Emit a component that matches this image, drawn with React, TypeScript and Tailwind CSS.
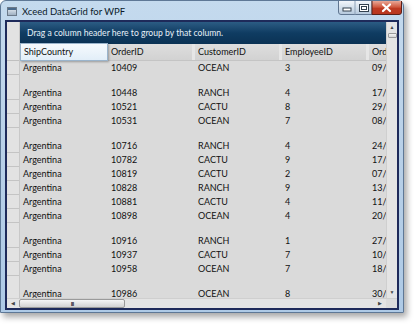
const font = { fontFamily: 'Lato, "Open Sans", sans-serif' };

type Row = [string, string, string, string] | null;

const rows: Row[] = [
  ["10409", "OCEAN", "3", "09/01/1997"],
  null,
  ["10448", "RANCH", "4", "17/02/1997"],
  ["10521", "CACTU", "8", "29/04/1997"],
  ["10531", "OCEAN", "7", "08/05/1997"],
  null,
  ["10716", "RANCH", "4", "24/10/1997"],
  ["10782", "CACTU", "9", "17/12/1997"],
  ["10819", "CACTU", "2", "07/01/1998"],
  ["10828", "RANCH", "9", "13/01/1998"],
  ["10881", "CACTU", "4", "11/02/1998"],
  ["10898", "OCEAN", "4", "20/02/1998"],
  null,
  ["10916", "RANCH", "1", "27/02/1998"],
  ["10937", "CACTU", "7", "10/03/1998"],
  ["10958", "OCEAN", "7", "18/03/1998"],
  null,
  ["10986", "OCEAN", "8", "30/03/1998"],
];

const cols = ["w-[88px]", "w-[87px]", "w-[87px]", "w-[87px]", "w-[60px]"];

// Vista caption buttons: minimize, maximize, close
function CaptionButtons() {
  return (
    <svg width="64" height="15" viewBox="0 0 64 15" className="ml-auto mr-[1px] shrink-0">
      <defs>
        <linearGradient id="cap" x1="0" y1="0" x2="0" y2="1">
          <stop offset="0" stopColor="#f2f6fb" />
          <stop offset="0.5" stopColor="#d3dfeb" />
          <stop offset="1" stopColor="#b3c7dc" />
        </linearGradient>
        <linearGradient id="close" x1="0" y1="0" x2="0" y2="1">
          <stop offset="0" stopColor="#e9a897" />
          <stop offset="0.45" stopColor="#d0593f" />
          <stop offset="0.55" stopColor="#be3a22" />
          <stop offset="1" stopColor="#b8361f" />
        </linearGradient>
      </defs>
      <path d="M0.5 0 V11 Q0.5 13.5 3 13.5 H34 V0" fill="url(#cap)" stroke="#5f7590" />
      <line x1="17" y1="0" x2="17" y2="13.5" stroke="#8ea2b8" />
      <rect x="5" y="7" width="8" height="3" fill="#fff" stroke="#33414f" />
      <rect x="21.5" y="3.5" width="9" height="7" fill="#fff" stroke="#33414f" />
      <rect x="23.5" y="5.5" width="5" height="3" fill="none" stroke="#33414f" />
      <path d="M34 0 V13.5 H61 Q63.5 13.5 63.5 11 V0" fill="url(#close)" stroke="#5a2018" />
      <path d="M45 3.5 L52 10 M52 3.5 L45 10" stroke="#fff" strokeWidth="2.2" strokeLinecap="round" />
    </svg>
  );
}

function TitleBar() {
  return (
    <div className="flex h-[19px] items-start">
      <div className="ml-[6px] mt-[6px] h-[9px] w-[10px] border border-[#6c7a8a] bg-gradient-to-b from-[#e8eef4] to-[#9fb0c2]">
        <div className="h-[2px] w-full bg-[#4a6a8c]" />
      </div>
      <span className="ml-[5px] mt-[5px] text-[9.5px] leading-[12px] text-[#0b1a2a]">Xceed DataGrid for WPF</span>
      <CaptionButtons />
    </div>
  );
}

function Cell({ w, children }: { w: string; children?: React.ReactNode }) {
  return <div className={`${w} shrink-0 overflow-hidden whitespace-nowrap pl-[3px]`}>{children}</div>;
}

function Grid() {
  return (
    <div className="flex min-w-0 flex-1 flex-col overflow-hidden bg-[#dadada]">
      <div className="flex h-[22px] shrink-0 items-center bg-gradient-to-b from-[#2c5c84] via-[#0f3c62] to-[#0b3254] pl-[7px] text-[8.6px] text-[#e8f0f8]">
        Drag a column header here to group by that column.
      </div>
      <div className="relative flex h-[17px] shrink-0 items-center border-b border-[#c4c4c4] bg-gradient-to-b from-[#dedede] to-[#d2d2d2] text-[9px] text-[#111]">
        {["", "OrderID", "CustomerID", "EmployeeID", "OrderDate"].map((h, i) => (
          <div
            key={i}
            className={`${cols[i]} flex h-full shrink-0 items-center overflow-hidden whitespace-nowrap border-r-[3px] border-[#e6e6e6] pl-[3px]`}
          >
            {h}
          </div>
        ))}
        <div className="absolute left-0 top-[-1px] flex h-[18px] w-[88px] items-center border border-[#9ab4cc] bg-gradient-to-b from-[#f6fafd] to-[#e2eef8] pl-[3px] shadow-[1px_1px_2px_rgba(0,0,0,0.3)]">
          ShipCountry
        </div>
      </div>
      <div className="flex flex-col text-[9px] text-[#111]">
        {rows.map((r, i) =>
          r ? (
            <div key={i} className="flex h-[14px] shrink-0 items-center">
              <Cell w={cols[0]}>Argentina</Cell>
              {r.map((v, j) => (
                <Cell key={j} w={cols[j + 1]}>
                  {v}
                </Cell>
              ))}
            </div>
          ) : (
            <div key={i} className="h-[11px] shrink-0" />
          )
        )}
      </div>
    </div>
  );
}

function Selector() {
  return (
    <div className="flex w-[13px] shrink-0 flex-col overflow-hidden border-r border-[#c8c8c8] bg-[#e2e2e2]">
      <div className="h-[39px] shrink-0 border-b border-[#c0c0c0]" />
      {rows.map((r, i) =>
        r ? (
          <div key={i} className="h-[14px] shrink-0 border-b border-[#c4c4c4]" />
        ) : (
          <div key={i} className="h-[11px] shrink-0" />
        )
      )}
    </div>
  );
}

function VScroll() {
  return (
    <div className="flex w-[11px] shrink-0 flex-col items-center border-l border-[#cfcfcf] bg-[#e4e4e4]">
      <span className="mt-[3px] text-[5px] leading-none text-[#444]">▲</span>
      <div className="mt-[3px] h-[5px] w-[9px] rounded-[1px] border border-[#9a9a9a] bg-gradient-to-b from-[#f4f4f4] to-[#d6d6d6]" />
      <span className="mb-[3px] mt-auto text-[5px] leading-none text-[#444]">▼</span>
    </div>
  );
}

function HScroll() {
  return (
    <div className="flex h-[10px] shrink-0 items-center border-t border-[#cfcfcf] bg-[#e4e4e4]">
      <span className="ml-[4px] text-[5px] leading-none text-[#444]">◀</span>
      <div className="ml-[4px] flex h-[9px] w-[106px] items-center justify-center rounded-[2px] border border-[#9a9a9a] bg-gradient-to-b from-[#f6f6f6] to-[#d2d2d2]">
        <span className="text-[6px] font-bold leading-none tracking-[-1px] text-[#333]">III</span>
      </div>
      <span className="ml-auto mr-[4px] text-[5px] leading-none text-[#444]">▶</span>
      <div className="h-full w-[11px] bg-[#dcdcdc]" />
    </div>
  );
}

export default function App() {
  return (
    <div className="h-[326px] w-[417px] bg-white" style={font}>
      <div className="flex h-[313px] w-[404px] flex-col rounded-t-[6px] border border-[#5e7896] bg-gradient-to-b from-[#c4daee] via-[#b8d0e8] to-[#aecae6] shadow-[3px_4px_6px_rgba(0,0,0,0.35)]">
        <TitleBar />
        <div className="mx-[4px] flex h-[290px] flex-col border-2 border-[#1e2a5a] bg-[#dadada]">
          <div className="flex min-h-0 flex-1">
            <Selector />
            <Grid />
            <VScroll />
          </div>
          <HScroll />
        </div>
      </div>
    </div>
  );
}
